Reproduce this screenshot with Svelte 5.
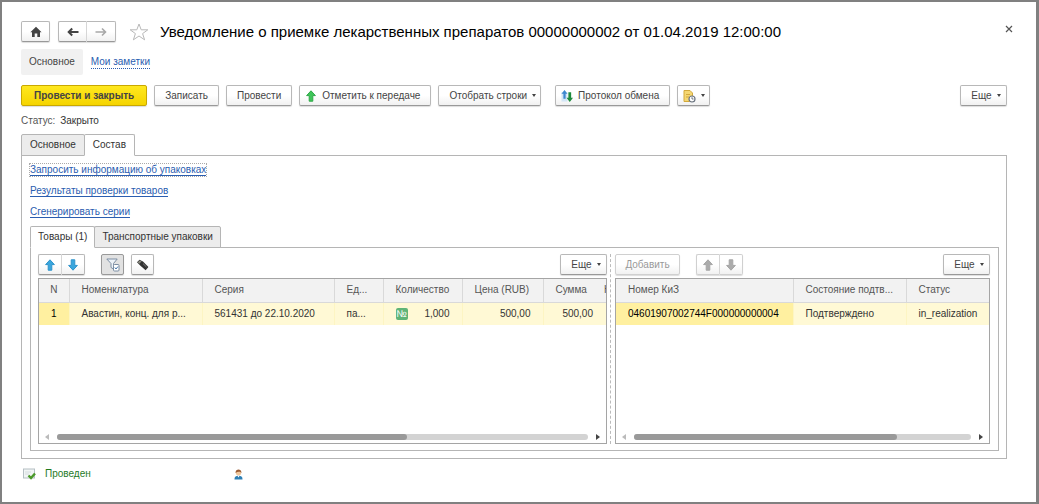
<script>
  let tab = $state('content')
  let goodsTab = $state('goods')
  let onlyMarked = $state(true)

  const links = [
    'Запросить информацию об упаковках',
    'Результаты проверки товаров',
    'Сгенерировать серии'
  ]

  const goods = [
    { n: 1, name: 'Авастин, конц. для р...', series: '561431 до 22.10.2020', unit: 'па...', qty: '1,000', price: '500,00', sum: '500,00' }
  ]

  const marks = [
    { code: '04601907002744F000000000004', state: 'Подтверждено', status: 'in_realization' }
  ]
</script>

{#snippet arrow(dir, fill, stroke)}
  <svg width="12" height="14" viewBox="0 0 12 14" aria-hidden="true">
    <path
      d="M6 1.8 L10.4 6.6 H7.8 V12.2 H4.2 V6.6 H1.6 Z"
      transform={dir === 'down' ? 'rotate(180 6 7)' : undefined}
      {fill}
      {stroke}
      stroke-linejoin="round"
    />
  </svg>
{/snippet}

{#snippet more()}
  <button class="btn more">Еще <span class="caret"></span></button>
{/snippet}

{#snippet scrollbar(size)}
  <div class="scroll">
    <span class="left"></span>
    <div class="track"><div class="thumb" style="width: {size}%"></div></div>
    <span class="right"></span>
  </div>
{/snippet}

<main class="window">
  <header class="top">
    <button class="btn square" aria-label="Домой">
      <svg width="12" height="12" viewBox="0 0 12 12">
        <path d="M6 0.8 L11.6 6.2 H10 V11 H7.3 V7.5 H4.7 V11 H2 V6.2 H0.4 Z" fill="#444" />
      </svg>
    </button>
    <div class="group nav">
      <button class="btn" aria-label="Назад">
        <svg width="12" height="10" viewBox="0 0 12 10">
          <path d="M11.5 5 H2 M5.2 1.5 L1.7 5 L5.2 8.5" fill="none" stroke="#444" stroke-width="2" />
        </svg>
      </button>
      <button class="btn" aria-label="Вперед">
        <svg width="12" height="10" viewBox="0 0 12 10">
          <path d="M0.5 5 H10 M7 1.5 L10.5 5 L7 8.5" fill="none" stroke="#a8a8a8" stroke-width="1.6" />
        </svg>
      </button>
    </div>
    <button class="plain star" aria-label="В избранное">
      <svg width="20" height="18" viewBox="0 0 20 18">
        <path d="M10 1 L12.2 6.8 H18.8 L13.6 10.6 L15.6 16.8 L10 13 L4.4 16.8 L6.4 10.6 L1.2 6.8 H7.8 Z" fill="#fff" stroke="#b8b8b8" />
      </svg>
    </button>
    <h1>Уведомление о приемке лекарственных препаратов 00000000002 от 01.04.2019 12:00:00</h1>
    <button class="plain close" aria-label="Закрыть">
      <svg width="8" height="8" viewBox="0 0 8 8"><path d="M1 1 L7 7 M7 1 L1 7" stroke="#555" stroke-width="1.2" /></svg>
    </button>
  </header>

  <nav class="sections">
    <a class="current" href="#main">Основное</a>
    <a class="notes" href="#notes">Мои заметки</a>
  </nav>

  <div class="commands">
    <button class="btn primary">Провести и закрыть</button>
    <button class="btn">Записать</button>
    <button class="btn">Провести</button>
    <button class="btn icon">{@render arrow('up', '#3fc559', '#2fa848')} Отметить к передаче</button>
    <button class="btn drop">Отобрать строки <span class="caret"></span></button>
    <button class="btn icon protocol">
      <svg width="12" height="14" viewBox="0 0 13 14" aria-hidden="true">
        <path d="M0.5 3 H7 V13 H0.5 Z" fill="#d3e5f5" />
        <path d="M3.8 0.5 L7 4.5 H5 V10 H2.6 V4.5 H0.5 Z" fill="#3d87cf" />
        <path d="M9.5 13.5 L13 9 H11 V3 H8 V9 H6 Z" fill="#1c8a3c" />
      </svg>
      Протокол обмена
    </button>
    <button class="btn report" aria-label="Отчеты">
      <svg width="13" height="14" viewBox="0 0 13 14" aria-hidden="true">
        <path d="M1 1.5 H7 L9.5 4 V12.5 H1 Z" fill="#f5d772" stroke="#d3a93b" />
        <path d="M3 5.5 H7 M3 8 H6" stroke="#d3a93b" />
        <circle cx="9" cy="10" r="3" fill="#fff" stroke="#6b7480" stroke-width="1.2" />
        <path d="M9 8.2 V10 H10.5" fill="none" stroke="#6b7480" />
      </svg>
      <span class="caret"></span>
    </button>
    <span class="space"></span>
    {@render more()}
  </div>

  <p class="state">Статус: <span>Закрыто</span></p>

  <div class="tabs" role="tablist">
    <button role="tab" aria-selected={tab === 'main'} class:active={tab === 'main'} onclick={() => (tab = 'main')}>Основное</button>
    <button role="tab" aria-selected={tab === 'content'} class:active={tab === 'content'} onclick={() => (tab = 'content')}>Состав</button>
  </div>

  <section class="panel">
    <ul class="links">
      {#each links as link, i}
        <li><a href="#action{i}" class:focused={i === 0}>{link}</a></li>
      {/each}
    </ul>

    <div class="tabs inner" role="tablist">
      <button role="tab" aria-selected={goodsTab === 'goods'} class:active={goodsTab === 'goods'} onclick={() => (goodsTab = 'goods')}>Товары (1)</button>
      <button role="tab" aria-selected={goodsTab === 'packs'} class:active={goodsTab === 'packs'} onclick={() => (goodsTab = 'packs')}>Транспортные упаковки</button>
    </div>

    <div class="panel split">
      <div class="pane">
        <div class="tools">
          <div class="group">
            <button class="btn" aria-label="Вверх">{@render arrow('up', '#3aa6dd', '#2f93cb')}</button>
            <button class="btn" aria-label="Вниз">{@render arrow('down', '#3aa6dd', '#2f93cb')}</button>
          </div>
          <button class="btn tool filter" class:pressed={onlyMarked} aria-label="Отбор" onclick={() => (onlyMarked = !onlyMarked)}>
            <svg width="14" height="14" viewBox="0 0 14 14">
              <path d="M0.8 1 H11.2 L7.5 5.5 V11 L5 9.5 V5.5 Z" fill="#eef3f8" stroke="#7c8ea3" />
              <rect x="7.5" y="6.5" width="5.5" height="6.5" rx="1" fill="#fff" stroke="#7c8ea3" />
              <path d="M8.8 9.5 L10 11 L12 8.5" fill="none" stroke="#4678ad" />
            </svg>
          </button>
          <button class="btn tool" aria-label="Сканер">
            <svg width="13" height="12" viewBox="0 0 13 12">
              <path d="M1 3.2 L3.5 0.8 L7 2.4 L12.4 8 L9.6 11.2 L4.2 6.6 Z" fill="#333" />
              <path d="M1.8 3.2 L3.8 1.5 L5.6 2.6 L3.2 4.8 Z" fill="#8b8b80" />
              <path d="M7 4.6 L10.5 8" stroke="#777" />
            </svg>
          </button>
          <span class="space"></span>
          {@render more()}
        </div>
        <div class="grid">
          <table>
            <colgroup>
              <col class="n" /><col class="name" /><col class="series" /><col class="unit" /><col class="qty" /><col class="price" /><col /><col class="vat" />
            </colgroup>
            <thead>
              <tr>
                <th class="center">N</th><th>Номенклатура</th><th>Серия</th><th>Ед...</th><th>Количество</th><th>Цена (RUB)</th>
                <th class="total">Сумма</th><th class="cut">НДС</th>
              </tr>
            </thead>
            <tbody>
              {#each goods as row}
                <tr>
                  <td class="cell center">{row.n}</td>
                  <td>{row.name}</td>
                  <td>{row.series}</td>
                  <td>{row.unit}</td>
                  <td><div class="amount"><span class="badge">№</span>{row.qty}</div></td>
                  <td class="num">{row.price}</td>
                  <td class="num total">{row.sum}</td>
                  <td class="cut"></td>
                </tr>
              {/each}
            </tbody>
          </table>
          {@render scrollbar(66)}
        </div>
      </div>

      <div class="divider"></div>

      <div class="pane">
        <div class="tools">
          <button class="btn add" disabled>Добавить</button>
          <div class="group">
            <button class="btn" disabled aria-label="Вверх">{@render arrow('up', '#ababab', '#a5a5a5')}</button>
            <button class="btn" disabled aria-label="Вниз">{@render arrow('down', '#ababab', '#a5a5a5')}</button>
          </div>
          <span class="space"></span>
          {@render more()}
        </div>
        <div class="grid">
          <table>
            <colgroup><col class="code" /><col class="confirm" /><col /></colgroup>
            <thead>
              <tr><th>Номер КиЗ</th><th>Состояние подтв...</th><th>Статус</th></tr>
            </thead>
            <tbody>
              {#each marks as row}
                <tr>
                  <td class="cell">{row.code}</td>
                  <td>{row.state}</td>
                  <td>{row.status}</td>
                </tr>
              {/each}
            </tbody>
          </table>
          {@render scrollbar(78)}
        </div>
      </div>
    </div>
  </section>

  <footer>
    <svg width="13" height="12" viewBox="0 0 13 12" aria-hidden="true">
      <rect x="0.5" y="1" width="11" height="9" fill="#f1f5f5" stroke="#b5bfc4" />
      <path d="M2 4 H8 M2 6 H6" stroke="#d5dcdf" />
      <path d="M5.5 7.5 L8 10 L12 5.5" fill="none" stroke="#4b9a2a" stroke-width="2.4" />
    </svg>
    <span class="posted">Проведен</span>
    <svg width="9" height="11" viewBox="0 0 9 11" aria-hidden="true">
      <path d="M0.5 10.5 C0.5 7.5 2 6.8 4.5 6.8 C7 6.8 8.5 7.5 8.5 10.5 Z" fill="#2c7fb5" />
      <circle cx="4.5" cy="3.8" r="2.7" fill="#f0c79c" />
      <path d="M1.6 4 C1 -0.6 8 -0.6 7.4 4 C6.5 2.2 3.5 2.2 1.6 4 Z" fill="#9a5b33" />
      <path d="M3.5 6.8 L4.5 8.6 L5.5 6.8 Z" fill="#fff" />
    </svg>
  </footer>
</main>

<style>
  :global(body) { margin: 0; background: #fff; }
  .window {
    box-sizing: border-box;
    min-height: 100vh;
    border: 2px solid #808080;
    border-right-width: 3px;
    padding: 19px 29px 16px 19px;
    background: #fff;
    color: #444;
    font: 10px/12px 'Liberation Sans', Arial, sans-serif;
  }
  button { font: inherit; color: inherit; }
  svg { flex: none; }
  .btn {
    box-sizing: border-box;
    height: 21px;
    padding: 0 10px;
    display: flex;
    align-items: center;
    justify-content: center;
    border: 1px solid #b8b8b8;
    border-bottom-color: #999;
    border-radius: 2px;
    background: linear-gradient(#fff 50%, #f1f1f1);
    box-shadow: 0 1px 1px #ddd;
    white-space: nowrap;
    cursor: pointer;
  }
  .btn:disabled { color: #999; border-color: #d0d0d0; }
  .plain { padding: 0; border: 0; background: none; display: flex; }
  .group { display: flex; }
  .group .btn { width: 24px; padding: 0; }
  .group .btn:first-child { border-radius: 2px 0 0 2px; border-right-color: #d5d5d5; }
  .group .btn:last-child { border-radius: 0 2px 2px 0; border-left: 0; width: 23px; }
  .space { flex: 1; }
  .caret {
    border: 2px solid transparent;
    border-top: 3px solid #444;
    border-bottom: 0;
    margin-left: 5px;
  }

  .top { display: flex; align-items: center; height: 21px; }
  .square { width: 29px; padding: 0; margin-right: 8px; }
  .nav .btn, .nav .btn:last-child { width: 29px; }
  .star { margin: 0 11px 0 13px; }
  h1 { flex: 1; margin: 0; font-size: 15px; line-height: 20px; font-weight: normal; color: #000; white-space: nowrap; }
  .close { align-self: flex-start; margin: 4px -6px 0 0; }

  .sections { display: flex; align-items: center; margin-top: 7px; height: 26px; }
  .current { padding: 7px 8px; border-radius: 2px; background: #f1f1f1; color: #444; text-decoration: none; }
  .notes { margin-left: 8px; color: #2a5db0; text-decoration: none; border-bottom: 1px dotted #2a5db0; }

  .commands { display: flex; gap: 7px; margin-top: 10px; }
  .primary { padding: 0 12px; background: linear-gradient(#ffe81f, #f5d400); border-color: #c9a800; font-weight: bold; }
  .icon { gap: 5px; padding-left: 5px; }
  .protocol { margin-left: 7px; }
  .drop { padding-right: 4px; }
  .report { padding: 0 4px 0 5px; }
  .more { width: 47px; padding: 0 5px 0 10px; }

  .state { margin: 9px 0 7px; color: #555; }
  .state span { margin-left: 2px; color: #333; }

  .tabs { display: flex; }
  .tabs button {
    height: 22px;
    margin-bottom: -1px;
    padding: 0 8px;
    border: 1px solid #b5b5b5;
    border-radius: 2px 2px 0 0;
    background: #ececec;
    color: #333;
  }
  .inner button { padding: 0 7px; }
  .tabs button + button { margin-left: -1px; }
  .tabs .active { background: #fff; border-bottom-color: #fff; z-index: 1; }
  .panel { border: 1px solid #b5b5b5; padding: 8px 7px 7px 8px; }

  .links { list-style: none; margin: 0 0 6px; padding: 0; display: flex; flex-direction: column; gap: 7px; }
  .links li { height: 14px; }
  .links a { color: #2a5db0; text-decoration: none; border-bottom: 1px solid #2a5db0; }
  .links .focused { outline: 1px dotted #aaa; }

  .split { display: grid; grid-template-columns: 569fr 8px 375fr; padding: 6px 8px 6px 7px; }
  .pane { min-width: 0; }
  .divider { width: 0; margin-left: 3px; border-left: 1px dashed #bbb; }
  .tools { display: flex; margin-bottom: 3px; }
  .tool { width: 23px; padding: 0; margin-right: 7px; }
  .filter { margin-left: 16px; }
  .pressed { background: #e2e2e2; border-color: #999; }
  .add { width: 65px; margin-right: 16px; }

  .grid { display: flex; flex-direction: column; height: 166px; border: 1px solid #a5a5a5; box-sizing: border-box; overflow: hidden; }
  table { width: 100%; table-layout: fixed; border-collapse: collapse; }
  th, td { box-sizing: border-box; padding: 0 12px; text-align: left; font-weight: normal; white-space: nowrap; overflow: hidden; }
  th { height: 23px; background: #f2f2f2; border-right: 1px solid #d9d9d9; border-bottom: 1px solid #d9d9d9; color: #555; }
  th:last-child, th.total { border-right: 0; }
  td { height: 23px; background: #fff9d5; border-right: 1px solid #fdf5c3; color: #333; }
  td:last-child, td.total { border-right: 0; }
  .cell { background: #fff0a0; color: #000; }
  .center { padding: 0; text-align: center; }
  .num { text-align: right; }
  .total { padding-right: 11px; }
  .cut { padding: 0; }
  .n { width: 30px; }
  .name { width: 133px; }
  .series { width: 132px; }
  .unit { width: 49px; }
  .qty { width: 79px; }
  .price { width: 81px; }
  .vat { width: 2px; }
  .code { width: 177px; }
  .confirm { width: 113px; }
  .amount { display: flex; align-items: center; justify-content: space-between; }
  .badge { width: 12px; height: 12px; border-radius: 2px; background: #5fb477; color: #fff; text-align: center; }

  .scroll { display: flex; align-items: center; gap: 8px; margin-top: auto; padding: 3px 6px; }
  .track { flex: 1; height: 6px; border-radius: 3px; background: #d3d3d3; }
  .thumb { height: 6px; border-radius: 3px; background: #999; }
  .left, .right { border: 3px solid transparent; }
  .left { border-right: 4px solid #bbb; border-left: 0; }
  .right { border-left: 4px solid #444; border-right: 0; }

  footer { display: flex; align-items: center; margin: 9px 2px 0; }
  .posted { width: 189px; margin-left: 9px; color: #1f7a1f; }
</style>
